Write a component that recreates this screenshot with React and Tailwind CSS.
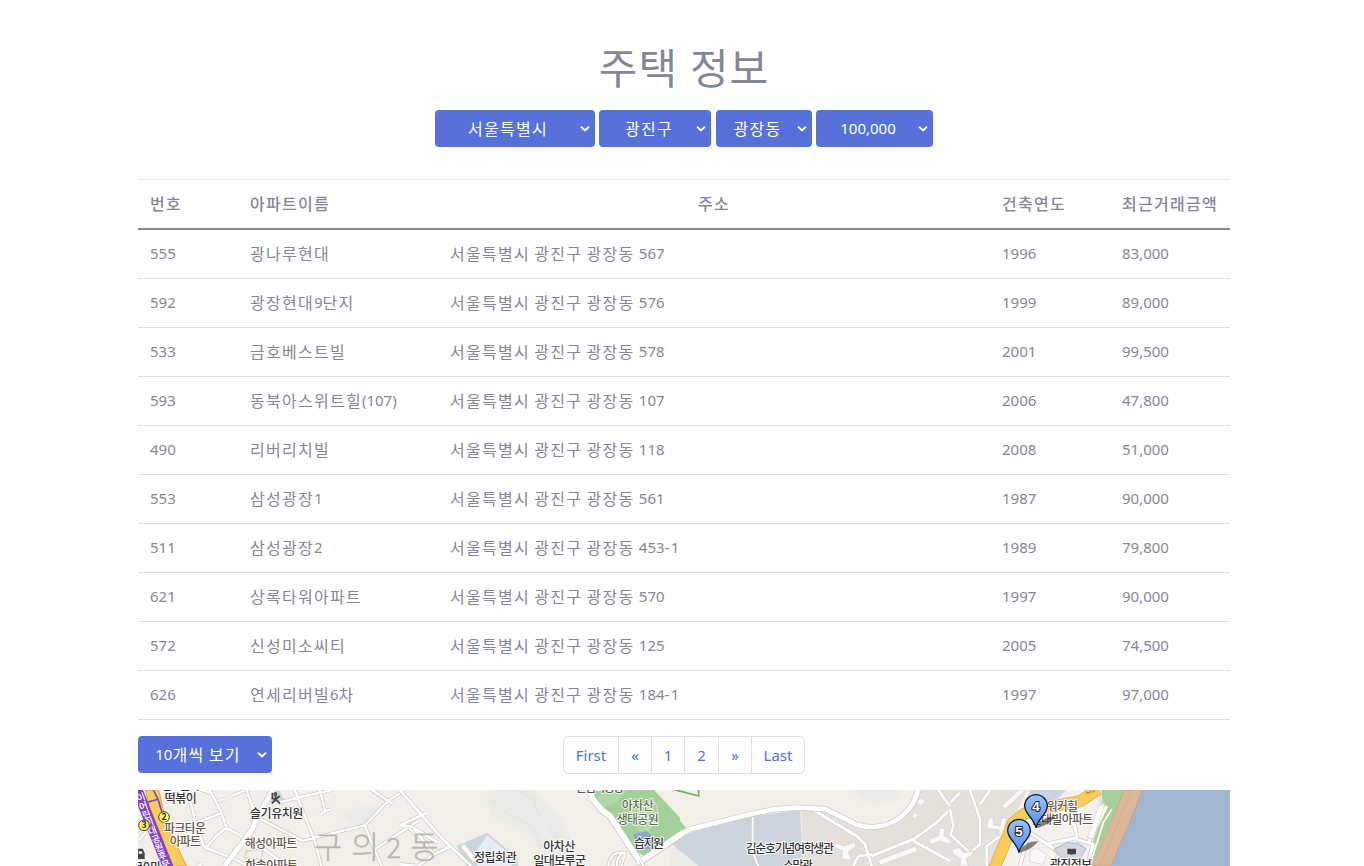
import React from 'react';

const columns = ['번호', '아파트이름', '주소', '건축연도', '최근거래금액'];

const houses = [
  ['555', '광나루현대', '서울특별시 광진구 광장동 567', '1996', '83,000'],
  ['592', '광장현대9단지', '서울특별시 광진구 광장동 576', '1999', '89,000'],
  ['533', '금호베스트빌', '서울특별시 광진구 광장동 578', '2001', '99,500'],
  ['593', '동북아스위트힐(107)', '서울특별시 광진구 광장동 107', '2006', '47,800'],
  ['490', '리버리치빌', '서울특별시 광진구 광장동 118', '2008', '51,000'],
  ['553', '삼성광장1', '서울특별시 광진구 광장동 561', '1987', '90,000'],
  ['511', '삼성광장2', '서울특별시 광진구 광장동 453-1', '1989', '79,800'],
  ['621', '상록타워아파트', '서울특별시 광진구 광장동 570', '1997', '90,000'],
  ['572', '신성미소씨티', '서울특별시 광진구 광장동 125', '2005', '74,500'],
  ['626', '연세리버빌6차', '서울특별시 광진구 광장동 184-1', '1997', '97,000'],
];

// Hangul runs are set slightly larger and looser than Latin runs.
function Mixed({ children }) {
  return children.split(/([가-힣]+|-)/).filter(Boolean).map((run, i) => {
    if (/[가-힣]/.test(run)) {
      return <span key={i} className="text-[16px] tracking-[1.27px]">{run}</span>;
    }
    return (
      <span key={i} className={`whitespace-pre align-[1px] text-[15px] leading-none [word-spacing:0.4px] ${run === '-' ? 'tracking-[1.2px]' : ''}`}>
        {run}
      </span>
    );
  });
}

function SelectButton({ className, children }) {
  return (
    <button className={`flex h-[37px] items-center rounded-[4px] bg-[#5671db] pr-[5px] text-white ${className}`}>
      <span className="flex-1 whitespace-nowrap text-center leading-[24px]"><Mixed>{children}</Mixed></span>
      <svg width="10" height="8" viewBox="0 0 10 8" className="shrink-0" fill="none" stroke="#fff" strokeWidth="2">
        <path d="M1 1.6 5 5.4 9 1.6" />
      </svg>
    </button>
  );
}

function Road({ d, w = 14, c = '#fff', o = '#c9c7c3' }) {
  return (
    <>
      <path d={d} fill="none" stroke={o} strokeWidth={w + 4} strokeLinejoin="round" />
      <path d={d} fill="none" stroke={c} strokeWidth={w} strokeLinejoin="round" />
    </>
  );
}

function Label({ x, y, w, size = 36, fill = '#333', children }) {
  return (
    <text x={x} y={y} textLength={w} fontSize={size} fill={fill} stroke="#fff" strokeWidth="5" paintOrder="stroke" fontWeight="500">
      {children}
    </text>
  );
}

function Pin({ x, y, n }) {
  return (
    <g transform={`translate(${x} ${y})`}>
      <path d="M0 0C14-28 34-34 58-34 50-22 26-4 0 0Z" fill="#222" opacity=".55" />
      <path d="M0 0C-5-28-34-42-34-66A34 34 0 0 1 34-66C34-42 5-28 0 0Z" fill="url(#pin)" stroke="#151c2b" strokeWidth="4" />
      <text y="-51" textAnchor="middle" fontSize="40" fontWeight="700" fill="#fff" stroke="#222" strokeWidth="6" paintOrder="stroke" fontFamily="Liberation Sans">{n}</text>
    </g>
  );
}

const subwayLetters = [
  ['이', 9, 36], ['어', 17, 62], ['린', 26, 87], ['이', 35, 111], ['대', 44, 136],
  ['공', 54, 161], ['원', 64, 186], ['후', 74, 211], ['문', 84, 236],
];

function CityMap() {
  return (
    <svg width="1092" height="76" viewBox="0 0 1092 76" className="mt-[16px] block" fontFamily="'Noto Sans CJK KR', sans-serif">
      <defs>
        <linearGradient id="pin" x1="0" y1="0" x2="0" y2="1">
          <stop offset="0" stopColor="#9cc4ff" />
          <stop offset="1" stopColor="#4f8cf5" />
        </linearGradient>
      </defs>
      <rect width="1092" height="76" fill="#f2efe9" />

      {/* wooded hill */}
      <g transform="translate(262 -4) scale(.33333)">
        <path d="M275 12 262 40 272 90 310 110 380 145 420 190 425 240H525L515 160 480 90 430 40 400 12Z" fill="#ebece6" />
        <path d="M350 12 400 40 415 80 450 120 480 175M275 40 320 80 380 110 415 150 422 190" fill="none" stroke="#dddeda" strokeWidth="2" />
        <path d="M170 180 262 140 350 215 355 240H200Z" fill="#ccd5de" />
        <path d="M232 190 262 148 335 210V240H232Z" fill="#e8ecf4" />
        <path d="M188 178 225 225" stroke="#fff" strokeWidth="12" />
        <path d="M575 12H762L840 95V160L740 215 700 190 650 110 590 60Z" fill="#a3cf98" />
        <path d="M605 12H680L650 50 610 65 590 45ZM690 80 740 50 780 90 740 150 720 140Z" fill="#b1d7a5" />
        <path d="M700 145 740 135 770 165 750 190 710 185Z" fill="#8da9c8" />
        <path d="M750 40C790 60 770 110 740 130 720 110 735 80 750 40" fill="none" stroke="#d0e4c8" strokeWidth="3" />
      </g>

      {/* campus and apartment blocks */}
      <g transform="translate(532 -4) scale(.33333)">
        <path d="M0 65 50 130 0 165Z" fill="#a3cf98" />
        <path d="M5 175 60 140 240 92 390 72 400 240H85Z" fill="#ccd5dd" />
        <path d="M5 175 85 240H0Z" fill="#ebece6" />
        <path d="M394 72H465L580 122 690 100 750 12H880V240H403Z" fill="#e4e0da" />
        <path d="M550 12H690C680 70 580 70 550 12Z" fill="#ebece6" />
        <path d="M10 10 86 30V12" fill="none" stroke="#74a968" strokeWidth="5" />
        <Road d="M248 92V200L265 240" w={6} />
        <Road d="M430 72 560 150 585 175 605 240M605 210 730 160 800 110 840 70M550 240 565 210 605 205M730 165 840 225M805 12 840 60" w={8} o="#d4d0cb" />
        <Road d="M-10 178 25 148 60 130 240 85 310 70 385 65 465 69 560 116Q625 135 680 102 730 70 745 10" w={14} />
        <path d="M495 170 522 180 555 168 558 182 535 197 545 222 515 220 518 195 495 185ZM625 222 738 180 742 196 630 238ZM775 160 805 150 810 125 825 128 822 150 840 160V175L812 165 782 175Z" fill="#faf9f7" stroke="#d3d0cc" strokeWidth="2" />
        <path d="M735 78 745 86 735 99 725 91ZM750 35 768 46 752 60 740 50Z" fill="#f8f7f4" stroke="#d3d0cc" strokeWidth="2" />
      </g>

      {/* streets on the west side */}
      <g transform="translate(0 -4) scale(.33333)">
        <path d="M610 85 680 55 730 60 700 110 640 120Z" fill="#ebece6" />
        <path d="M390 15H425L440 45 400 60Z" fill="#ccd5de" />
        <Road d="M145 12 165 75 170 110 200 185 280 215 330 240M170 112 248 82M215 12 248 75 265 125 310 150M265 125 235 150 200 190M190 12 215 20M240 45 262 37M280 30 320 14M325 12 355 92 495 165 530 155M400 55 500 30 580 12M470 12 530 165 550 240M530 155 680 118 750 45 800 12M680 118 730 240M545 12 562 75 548 85M562 75 578 70M700 12 765 55M710 190 840 105M805 120 840 150M370 185 450 240M0 165 22 140M180 240 195 232" w={7} />
        <Road d="M405 12 365 80 340 135 260 240" w={15} />
        <Road d="M750 45 700 10M785 12 910 155 1000 240M786 118 864 82M786 118 822 122 888 205M822 122 900 170M840 240 888 205 940 180M786 235 840 240" w={8} />
        <path d="M325 195 375 190 370 220 320 215Z" fill="none" stroke="#d8d3cd" strokeWidth="4" />
        <path d="M22 12H62L85 110 145 240H75Z" fill="#fbcb5c" stroke="#d9a94c" strokeWidth="3" />
        <path d="M-2 12 40 118 92 248" fill="none" stroke="#7d45c4" strokeWidth="32" />
        <path d="M30 48 60 40 46 12M60 40 72 78" fill="none" stroke="#7d45c4" strokeWidth="5" />
        <g fontSize="28" fontWeight="500" fill="#fff" textAnchor="middle">
          {subwayLetters.map(([ch, x, y]) => (
            <text key={y} transform={`translate(${x} ${y}) rotate(-20)`} y="8">{ch}</text>
          ))}
        </g>
        <g fontSize="92" fontWeight="300" fill="#b9b6b2" stroke="#b9b6b2" strokeWidth="1">
          <text x="528" y="215">구</text>
          <text x="639" y="215">의</text>
          <text x="745" y="215" fontSize="84">2</text>
          <text x="817" y="215">동</text>
        </g>
        <g stroke="#4c471d" strokeWidth="3" fill="#fff36b"><circle cx="78" cy="93" r="16" /><circle cx="18" cy="118" r="16" /></g>
        <g fontSize="26" fontWeight="700" textAnchor="middle" fill="#222"><text x="78" y="102">2</text><text x="18" y="127">3</text></g>
        <Label x={70} y={12} w={115}>신토불이</Label>
        <Label x={80} y={52} w={96}>떡볶이</Label>
        <Label x={78} y={141} w={126} fill="#66584b">파크타운</Label>
        <Label x={95} y={179} w={94} fill="#66584b">아파트</Label>
        <Label x={336} y={96} w={160}>슬기유치원</Label>
        <Label x={320} y={185} w={158} fill="#66584b">해성아파트</Label>
        <Label x={322} y={252} w={158} fill="#66584b">한솔아파트</Label>
        <Label x={-30} y={257} w={100}>어린이마</Label>
        <path d="M0 188H14L20 202V219H0Z" fill="#444" />
        <path d="M2 196H11L14 203H2Z" fill="#fff" />
        <path d="M403 20V37L412 40 402 53M413 25V40L426 53M425 30 414 39" fill="none" stroke="#444" strokeWidth="5" />
        <circle cx="412" cy="24" r="6" fill="#555" />
      </g>

      <g transform="translate(262 -4) scale(.33333)">
        <Road d="M572 5 575 35 605 72 630 90 720 228 850 140" w={17} />
        <Road d="M625 240Q630 195 675 200M650 240Q650 205 675 200L665 240M720 220 735 250" w={6} />
        <Label x={222} y={227} w={128}>정립회관</Label>
        <Label x={430} y={196} w={96}>아차산</Label>
        <Label x={400} y={236} w={158}>일대보루군</Label>
        <Label x={527} y={18} w={146} fill="#555">산림욕공장</Label>
        <Label x={665} y={71} w={96} fill="#52734e">아차산</Label>
        <Label x={650} y={113} w={126} fill="#52734e">생태공원</Label>
        <Label x={702} y={187} w={90}>습지원</Label>
      </g>
      <g transform="translate(532 -4) scale(.33333)">
        <Label x={227} y={202} w={265}>김순호기념여학생관</Label>
        <Label x={340} y={252} w={88}>소망관</Label>
      </g>

      {/* riverside */}
      <g transform="translate(812 -4) scale(.33333)">
        <path d="M0 12H520V240H0Z" fill="#e4e0da" />
        <path d="M230 12H450L420 240H130Z" fill="#f4f1ee" />
        <path d="M240 12H350L300 60H225Z" fill="#cbd4de" />
        <path d="M455 12H525L435 215 415 240 430 170 460 80Z" fill="#a6d09a" />
        <path d="M577 12H840V240H482Z" fill="#a1b7cf" />
        <path d="M522 12H577Q545 100 482 240H425Q490 100 522 12Z" fill="#dcb898" stroke="#c39a78" strokeWidth="2" />
        <path d="M545 12 450 240" stroke="#cda684" strokeWidth="2" />
        <Road d="M0 50 30 20M60 12 90 100V175L60 200 0 145M0 70 10 120 0 150M90 55 120 12M110 240V180L165 140" w={7} o="#d4d0cb" />
        <path d="M155 60 205 12H228L165 70ZM115 95H130V115L150 120 155 95H170L160 150 145 145 148 132 110 128ZM5 190 30 185 40 200 70 195 65 210 48 218 55 240H30L32 218 10 205Z" fill="#faf9f7" stroke="#d1cdc9" strokeWidth="2" />
        <Road d="M130 255 190 110 225 82 300 62 390 46 445 10" w={32} c="#fbcb5c" o="#dca94e" />
        <Road d="M210 240 235 145M240 140 330 200 310 240M285 175 380 155 375 120 340 80M380 160 430 175 410 240M415 170 470 60" w={9} />
        <path d="M425 220 460 110 485 70" fill="none" stroke="#fff" strokeWidth="5" />
        <path d="M445 60 465 52 430 160 412 155ZM240 195 260 185 290 205 280 235 240 228Z" fill="#faf9f7" stroke="#d1cdc9" strokeWidth="2" />
        <path d="M312 190 350 170 385 172 408 188 385 225 340 222Z" fill="#d3d9e2" stroke="#aab3bf" strokeWidth="3" />
        <path d="M352 188H363L365 190 367 188H378V205H368L365 208 362 205H352Z" fill="#444" />
        <path d="M409 20 Q420 24 424 14M429 20 435 8" fill="none" stroke="#8a6c31" strokeWidth="3" />
        <Label x={290} y={74} w={94} fill="#66584b">워커힐</Label>
        <Label x={242} y={113} w={188} fill="#66584b">현대빌아파트</Label>
        <Label x={300} y={249} w={126}>광진정보</Label>
        <Pin x={258} y={126} n="4" />
        <Pin x={207} y={200} n="5" />
      </g>
    </svg>
  );
}

export default function App() {
  return (
    <main className="h-screen overflow-hidden bg-white pl-[4px] font-['Noto_Sans','Noto_Sans_CJK_KR',sans-serif] text-[#858796]">
      <div className="mx-auto flex w-[1092px] flex-col pt-[38px]">
        <h1 className="h-[72px] text-center text-[42px] leading-[60px] tracking-[1px]">주택 정보</h1>
        <div className="flex justify-center gap-[4px]">
          <SelectButton className="w-[160px] pl-[1px]">서울특별시</SelectButton>
          <SelectButton className="w-[112px] pl-[3px]">광진구</SelectButton>
          <SelectButton className="ml-[1px] w-[96px] pl-[2px]">광장동</SelectButton>
          <SelectButton className="w-[117px] pl-[2px]">100,000</SelectButton>
        </div>

        <table className="mt-[32px] w-full table-fixed border-separate border-spacing-0 text-left">
          <colgroup>
            <col className="w-[100px]" />
            <col className="w-[200px]" />
            <col className="w-[552px]" />
            <col className="w-[120px]" />
            <col className="w-[120px]" />
          </colgroup>
          <thead>
            <tr>
              {columns.map((c) => (
                <th key={c} className={`h-[51px] whitespace-nowrap border-b-2 border-t border-b-[#858796] border-t-[#e3e6f0] pl-[12px] font-medium leading-[24px] ${c === '주소' ? 'pr-[12px] text-center' : ''}`}>
                  <Mixed>{c}</Mixed>
                </th>
              ))}
            </tr>
          </thead>
          <tbody>
            {houses.map((row) => (
              <tr key={row[0]}>
                {row.map((v, i) => (
                  <td key={i} className="h-[49px] whitespace-nowrap border-b border-[#dee0e5] pl-[12px] leading-[24px]">
                    <Mixed>{v}</Mixed>
                  </td>
                ))}
              </tr>
            ))}
          </tbody>
        </table>

        <div className="mt-[16px] grid h-[38px] grid-cols-[1fr_auto_1fr]">
          <SelectButton className="w-[134px] pl-[1px]">10개씩 보기</SelectButton>
          <nav className="flex h-[38px] w-[242px] divide-x divide-[#dddfeb] overflow-hidden rounded-[6px] border border-[#dddfeb] text-[15px] leading-[36px] text-[#4e73df]">
            <a className="w-[55px] text-center">First</a>
            <a className="w-[33px] text-center">«</a>
            <a className="w-[33px] text-center">1</a>
            <a className="w-[34px] text-center">2</a>
            <a className="w-[33px] text-center">»</a>
            <a className="flex-1 text-center">Last</a>
          </nav>
        </div>
        <CityMap />
      </div>
    </main>
  );
}
